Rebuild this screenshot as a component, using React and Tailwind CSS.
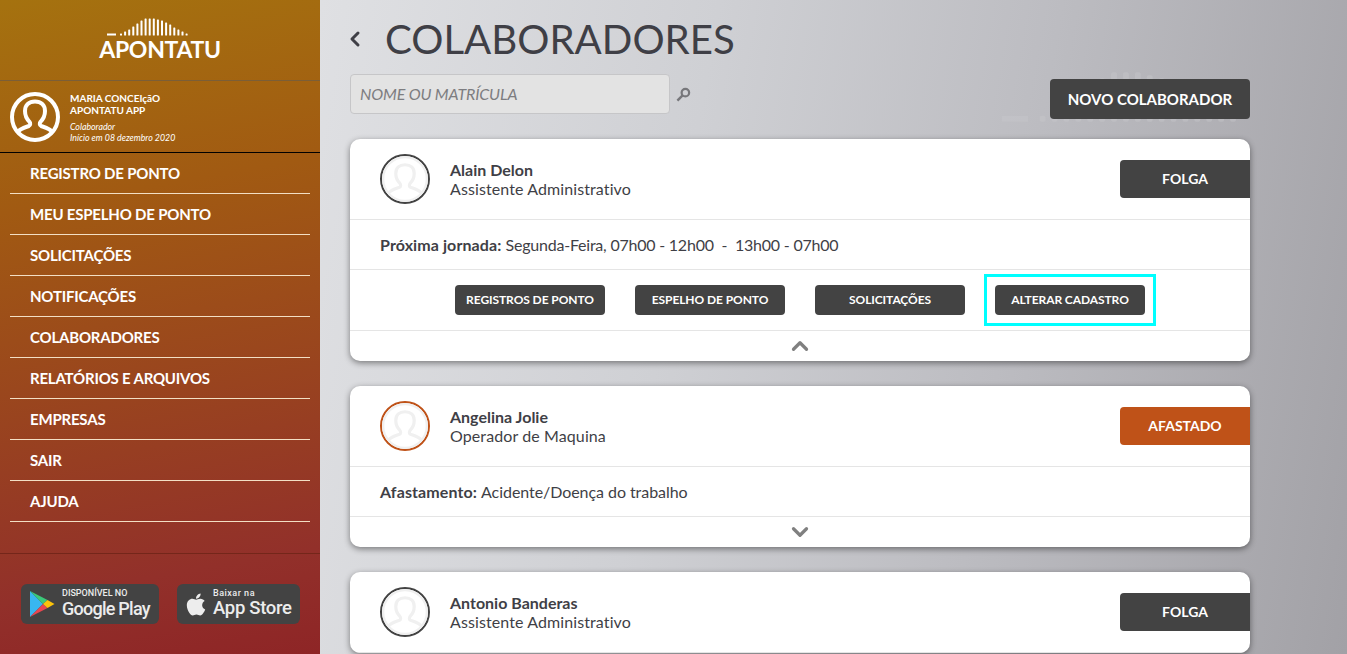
import React from 'react';
import { ChevronLeft, ChevronUp, ChevronDown } from 'lucide-react';
import { FaApple } from 'react-icons/fa';

const NAV_ITEMS = [
  'REGISTRO DE PONTO',
  'MEU ESPELHO DE PONTO',
  'SOLICITAÇÕES',
  'NOTIFICAÇÕES',
  'COLABORADORES',
  'RELATÓRIOS E ARQUIVOS',
  'EMPRESAS',
  'SAIR',
  'AJUDA',
];

const ACTIONS = ['REGISTROS DE PONTO', 'ESPELHO DE PONTO', 'SOLICITAÇÕES', 'ALTERAR CADASTRO'];

const LOGO_BARS = [2, 4, 6, 9, 12, 15, 17, 17, 17, 16, 15, 13, 11, 8, 6, 4, 2];

function LogoBars({ color, className }) {
  return (
    <svg viewBox="0 0 82 18" className={className} fill={color}>
      <rect x="0" y="15.5" width="9" height="2" />
      {LOGO_BARS.map((h, i) => (
        <rect key={i} x={13 + i * 4.1} y={17.5 - h} width="2" height={h} rx="0.6" />
      ))}
    </svg>
  );
}

function Person({ color, width = 3 }) {
  return (
    <path
      d="M6.5 41 C10 36.5 14.5 35.5 19 34 C20.5 33.4 20.5 31 19.5 29.8 C16.5 26.8 15 23 15 19 C15 13 19 9.5 25 9.5 C31 9.5 35 13 35 19 C35 23 33.5 26.8 30.5 29.8 C29.5 31 29.5 33.4 31 34 C35.5 35.5 40 36.5 43.5 41"
      fill="none"
      stroke={color}
      strokeWidth={width}
      strokeLinejoin="round"
    />
  );
}

function Avatar({ ring }) {
  return (
    <div className={`h-[50px] w-[50px] shrink-0 overflow-hidden rounded-full border-2 bg-white ${ring}`}>
      <svg viewBox="0 0 50 50" className="h-full w-full">
        <circle cx="25" cy="25" r="24" fill="none" stroke="#f0f0f0" strokeWidth="3" />
        <Person color="#f0f0f0" width={3.5} />
      </svg>
    </div>
  );
}

function CardHead({ name, role, status, statusBg, ring }) {
  return (
    <div className="flex h-[81px] items-center justify-between border-b border-[#e5e5e5] pl-[30px]">
      <div className="flex items-center gap-5">
        <Avatar ring={ring} />
        <div className="text-base leading-[19px] text-[#3f3f46]">
          <p className="font-bold">{name}</p>
          <p className="tracking-[0.1px]">{role}</p>
        </div>
      </div>
      <div className={`flex h-[38px] w-[130px] items-center justify-center rounded-l text-sm font-bold text-white ${statusBg}`}>
        {status}
      </div>
    </div>
  );
}

function Card({ children }) {
  return <section className="mb-[25px] overflow-hidden rounded-[10px] bg-white shadow-[0_2px_6px_rgba(0,0,0,0.45)]">{children}</section>;
}

function InfoRow({ label, children }) {
  return (
    <div className="flex h-[50px] items-center border-b border-[#e5e5e5] pl-[30px] text-base text-[#3f3f46]">
      <p className="whitespace-pre">
        <b className="tracking-[0.1px]">{label}</b> {children}
      </p>
    </div>
  );
}

function GooglePlayBadge() {
  return (
    <div className="flex h-10 w-[138px] items-center gap-[7px] rounded-md bg-[#434343] pl-2 text-white">
      <svg viewBox="0 0 26 28" className="h-[28px] w-[26px] shrink-0">
        <path d="M1 1 L14 14 L1 27 Z" fill="#38b6f0" />
        <path d="M1 1 L18.5 10 L14 14 Z" fill="#3bc97b" />
        <path d="M1 27 L18.5 18 L14 14 Z" fill="#e94650" />
        <path d="M18.5 10 L25.5 14 L18.5 18 L14 14 Z" fill="#fcc30b" />
      </svg>
      <div className="whitespace-nowrap pb-[2px] font-['Roboto',sans-serif] text-[#ececec]">
        <p className="text-[9px] font-medium leading-[10px]">DISPONÍVEL NO</p>
        <p className="text-[18px] font-medium leading-[21px] tracking-[-0.75px]">Google Play</p>
      </div>
    </div>
  );
}

function AppStoreBadge() {
  return (
    <div className="flex h-10 w-[123px] items-center gap-[6px] rounded-md bg-[#434343] pl-[8px]">
      <FaApple className="h-[25px] w-[22px] shrink-0 text-[#ededed]" />
      <div className="whitespace-nowrap pb-[2px] font-['Roboto',sans-serif] text-[#ececec]">
        <p className="text-[9px] font-medium leading-[10px] tracking-[0.5px]">Baixar na</p>
        <p className="text-[18.5px] font-medium leading-[21px] tracking-[-0.3px]">App Store</p>
      </div>
    </div>
  );
}

function Sidebar() {
  return (
    <aside className="flex h-full w-[320px] shrink-0 flex-col bg-[linear-gradient(170deg,#a5720f_0%,#a15a12_30%,#92302a_85%,#8e2526_100%)] text-white">
      <div className="flex h-[81px] flex-col items-center border-b border-[#7b5e37] pt-[18px]">
        <LogoBars color="#ffffff" className="ml-[-24px] h-[18px] w-[82px]" />
        <p className="mt-[2px] text-[23px] font-bold leading-[22px] tracking-[-0.3px]">APONTATU</p>
      </div>

      <div className="flex h-[72px] items-center gap-[10px] border-b border-black pl-[10px]">
        <svg viewBox="0 0 50 50" className="h-[50px] w-[50px] shrink-0">
          <circle cx="25" cy="25" r="23" fill="none" stroke="#fff" strokeWidth="4" />
          <Person color="#fff" width={4} />
        </svg>
        <div className="pt-px">
          <p className="text-[10px] font-bold leading-[12px]">MARIA CONCEIçãO</p>
          <p className="text-[10px] font-bold leading-[12px]">APONTATU APP</p>
          <p className="mt-[5px] text-[8.8px] italic leading-[11px]">Colaborador</p>
          <p className="text-[8.8px] italic leading-[11px]">Início em 08 dezembro 2020</p>
        </div>
      </div>

      <nav className="px-[10px]">
        {NAV_ITEMS.map((item) => (
          <a key={item} className="flex h-[41px] items-center border-b border-[#f3dfc4] pl-5 pt-px text-[15px] font-bold tracking-[-0.2px]">
            {item}
          </a>
        ))}
      </nav>

      <div className="mt-[31px] flex flex-1 gap-[18px] border-t border-[#74261a] pl-[21px] pt-[30px]">
        <GooglePlayBadge />
        <AppStoreBadge />
      </div>
    </aside>
  );
}

export default function App() {
  return (
    <div className="flex h-[654px] overflow-hidden font-['Lato',sans-serif]">
      <Sidebar />

      <main className="relative min-w-0 flex-1 bg-[linear-gradient(100deg,#dfe0e3_0%,#cfd0d4_35%,#bcbcc1_65%,#a2a1a6_100%)] pl-[30px]">
        <LogoBars color="#c9c9cd" className="absolute left-[682px] top-[70px] h-[54px] w-[238px] opacity-40" />

        <div className="relative w-[900px]">
          <div className="flex h-[74px] items-center pt-[4px]">
            <ChevronLeft className="ml-[-7px] h-[24px] w-[24px] text-[#3f3f46]" strokeWidth={3} />
            <h1 className="ml-[18px] text-[40.2px] leading-none text-[#3f3f46]">COLABORADORES</h1>
          </div>

          <div className="flex h-[65px] items-start justify-between">
            <div className="flex items-center">
              <input
                readOnly
                placeholder="NOME OU MATRÍCULA"
                className="h-10 w-[320px] rounded border border-[#c6c6c8] bg-[#e3e3e3] pb-[2px] pl-[9px] text-base italic tracking-[-0.15px] placeholder:text-[#7d7d80]"
              />
              <svg viewBox="0 0 16 16" className="ml-[6px] mt-px h-[15px] w-[15px]" fill="none" stroke="#77777b">
                <circle cx="10" cy="6" r="4" strokeWidth="2.4" />
                <path d="M7 9 L1.5 14.5" strokeWidth="2.6" />
              </svg>
            </div>
            <button className="mt-[5px] h-10 w-[200px] rounded bg-[#434343] text-[15px] font-bold text-white">
              NOVO COLABORADOR
            </button>
          </div>

          <Card>
            <CardHead name="Alain Delon" role="Assistente Administrativo" status="FOLGA" statusBg="bg-[#434343]" ring="border-[#434343]" />
            <InfoRow label="Próxima jornada:">
              <span className="tracking-[-0.22px]">Segunda-Feira, 07h00 - 12h00  -  13h00 - 07h00</span>
            </InfoRow>
            <div className="flex h-[61px] items-center justify-center gap-[30px] border-b border-[#e5e5e5]">
              {ACTIONS.map((label) => (
                <button key={label} className="relative h-[30px] w-[150px] rounded bg-[#434343] text-xs font-bold tracking-[-0.08px] text-white">
                  {label}
                  {label === 'ALTERAR CADASTRO' && (
                    <span className="absolute inset-x-[-11px] inset-y-[-11px] border-[3px] border-[#0ff]" />
                  )}
                </button>
              ))}
            </div>
            <div className="flex h-[30px] items-center justify-center">
              <ChevronUp className="h-[26px] w-[26px] text-[#808080]" strokeWidth={3} />
            </div>
          </Card>

          <Card>
            <CardHead name="Angelina Jolie" role="Operador de Maquina" status="AFASTADO" statusBg="bg-[#bf5218]" ring="border-[#bf5218]" />
            <InfoRow label="Afastamento:">
              <span className="tracking-[-0.06px]">Acidente/Doença do trabalho</span>
            </InfoRow>
            <div className="flex h-[30px] items-center justify-center">
              <ChevronDown className="h-[26px] w-[26px] text-[#808080]" strokeWidth={3} />
            </div>
          </Card>

          <Card>
            <CardHead name="Antonio Banderas" role="Assistente Administrativo" status="FOLGA" statusBg="bg-[#434343]" ring="border-[#434343]" />
          </Card>
        </div>
      </main>
    </div>
  );
}
